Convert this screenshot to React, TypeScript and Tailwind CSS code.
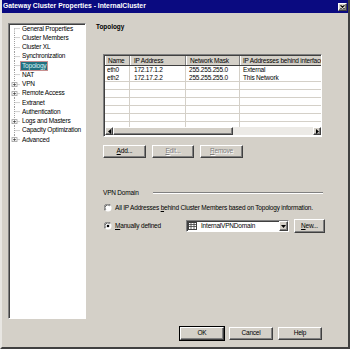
import React from "react";

const raised =
  "border border-t-white border-l-white border-b-[#404040] border-r-[#404040] shadow-[inset_-1px_-1px_#808080] bg-[#d4d0c8]";
const sunken =
  "border border-t-[#808080] border-l-[#808080] border-b-white border-r-white shadow-[inset_1px_1px_#404040]";

type BtnProps = { w: string; children: React.ReactNode; disabled?: boolean; def?: boolean };
const Btn = ({ w, children, disabled, def }: BtnProps) => (
  <div
    className={`h-[13px] ${w} ${raised} flex items-center justify-center leading-none ${
      disabled ? "text-[#808080] [text-shadow:1px_1px_#ffffff]" : "text-black"
    } ${def ? "outline outline-black" : ""}`}
  >
    {children}
  </div>
);

const items: { t: string; sel?: boolean; plus?: boolean }[] = [
  { t: "General Properties" },
  { t: "Cluster Members" },
  { t: "Cluster XL" },
  { t: "Synchronization" },
  { t: "Topology", sel: true },
  { t: "NAT" },
  { t: "VPN", plus: true },
  { t: "Remote Access", plus: true },
  { t: "Extranet" },
  { t: "Authentication" },
  { t: "Logs and Masters", plus: true },
  { t: "Capacity Optimization" },
  { t: "Advanced", plus: true },
];

const Radio = ({ checked }: { checked?: boolean }) => (
  <svg width="8" height="8" viewBox="0 0 8 8" className="shrink-0">
    <circle cx="4" cy="4" r="3.5" fill="#ffffff" />
    <path d="M1 6.5 A3.5 3.5 0 0 1 6.5 1" stroke="#808080" strokeWidth="1" fill="none" />
    <path d="M1.8 5.8 A2.6 2.6 0 0 1 5.8 1.8" stroke="#404040" strokeWidth="0.8" fill="none" />
    {checked && <circle cx="4" cy="4" r="1.3" fill="#000000" />}
  </svg>
);

export default function App() {
  const rows = Array.from({ length: 6 });
  return (
    <div className="w-[350px] h-[349px] bg-[#d4d0c8] flex flex-col border-l-2 border-l-[#e8e6e2] border-r-2 border-r-[#404040] border-b-2 border-b-[#404040] font-['Liberation_Sans',Arial,sans-serif] text-[6.5px] tracking-[-0.2px] text-black overflow-hidden">
      {/* Title bar */}
      <div className="h-[13px] shrink-0 bg-[#0a0a80] flex items-center justify-between pl-[1px] pr-[1px]">
        <span className="text-white font-bold text-[6.8px] tracking-normal leading-none">
          Gateway Cluster Properties - InternalCluster
        </span>
        <div className={`w-[9px] h-[8px] ${raised} flex items-center justify-center`}>
          <svg width="5" height="4" viewBox="0 0 5 4">
            <path d="M0.5 0.3 L4.5 3.7 M4.5 0.3 L0.5 3.7" stroke="#000" strokeWidth="1.1" />
          </svg>
        </div>
      </div>

      {/* Body */}
      <div className="flex h-[306px] shrink-0">
        {/* Tree */}
        <div className={`mt-[10px] ml-[6px] w-[78px] h-[296px] bg-white ${sunken} pl-[1px]`}>
          {items.map((it, i) => {
            const first = i === 0;
            const last = i === items.length - 1;
            return (
              <div key={it.t} className="flex h-[9.25px] items-center">
                <svg width="11" height="9.25" viewBox="0 0 11 9.25" className="shrink-0">
                  <line
                    x1="4.5"
                    y1={first ? 4.6 : 0}
                    x2="4.5"
                    y2={last ? 4.6 : 9.25}
                    stroke="#a0a0a0"
                    strokeWidth="1"
                    strokeDasharray="1 1"
                  />
                  <line x1="4.5" y1="4.6" x2="10.5" y2="4.6" stroke="#a0a0a0" strokeWidth="1" strokeDasharray="1 1" />
                  {it.plus && (
                    <g>
                      <rect x="2" y="2.6" width="5" height="4" fill="#ffffff" stroke="#a0a0a0" strokeWidth="0.8" />
                      <path d="M3 4.6 H6 M4.5 3.3 V5.9" stroke="#303030" strokeWidth="0.7" />
                    </g>
                  )}
                </svg>
                <span
                  className={`px-[1px] leading-[8px] h-[8px] whitespace-nowrap ${
                    it.sel ? "bg-[#21707f] text-[#d8f4f4] outline outline-[#c89090]" : ""
                  }`}
                >
                  {it.t}
                </span>
              </div>
            );
          })}
        </div>

        {/* Right panel */}
        <div className="flex flex-col w-[262px]">
          <div className="mt-[10px] ml-[10px] h-[8px] leading-[8px] font-bold text-[6.4px] tracking-normal">Topology</div>

          {/* Table */}
          <div className={`mt-[23px] ml-[17px] w-[219px] h-[83px] bg-white ${sunken} flex flex-col overflow-hidden`}>
            <div className="flex h-[10px] shrink-0 bg-[#d4d0c8] border-b border-b-[#404040] leading-[9px] whitespace-nowrap ml-[1px] mt-[1px]">
              <div className="w-[25px] shrink-0 pl-[2px] border-r border-r-[#808080] border-l border-l-white">Name</div>
              <div className="w-[56px] shrink-0 pl-[3px] border-r border-r-[#808080] border-l border-l-white">IP Address</div>
              <div className="w-[54px] shrink-0 pl-[3px] border-r border-r-[#808080] border-l border-l-white">Network Mask</div>
              <div className="w-[82px] shrink-0 pl-[2px] border-l border-l-white overflow-hidden">IP Addresses behind interface</div>
            </div>
            <div className="flex-1 ml-[1px] overflow-hidden">
              {[
                ["eth0", "172.17.1.2", "255.255.255.0", "External"],
                ["eth2", "172.17.2.2", "255.255.255.0", "This Network"],
              ].map((r, i) => (
                <div
                  key={r[0]}
                  className={`flex h-[8px] leading-[8px] whitespace-nowrap ${
                    i === 1 ? "border-b border-b-[#d4d0c8]" : ""
                  }`}
                >
                  <div className="w-[25px] shrink-0 pl-[2px] border-r border-r-[#d4d0c8]">{r[0]}</div>
                  <div className="w-[56px] shrink-0 pl-[4px] border-r border-r-[#d4d0c8]">{r[1]}</div>
                  <div className="w-[54px] shrink-0 pl-[3px] border-r border-r-[#d4d0c8]">{r[2]}</div>
                  <div className="flex-1 pl-[3px]">{r[3]}</div>
                </div>
              ))}
              {rows.map((_, i) => (
                <div key={i} className="flex h-[8px] border-b border-b-[#d4d0c8]">
                  <div className="w-[25px] shrink-0 border-r border-r-[#d4d0c8]" />
                  <div className="w-[56px] shrink-0 border-r border-r-[#d4d0c8]" />
                  <div className="w-[54px] shrink-0 border-r border-r-[#d4d0c8]" />
                  <div className="flex-1" />
                </div>
              ))}
            </div>
            {/* Horizontal scrollbar */}
            <div className="flex h-[8px] shrink-0 ml-[1px] mb-[1px] bg-[#eceae6]">
              <div className={`w-[8px] h-[8px] ${raised} flex items-center justify-center`}>
                <svg width="3" height="5" viewBox="0 0 3 5">
                  <path d="M3 0 L0 2.5 L3 5 Z" fill="#000" />
                </svg>
              </div>
              <div className={`w-[120px] h-[8px] ${raised}`} />
              <div className="flex-1" />
              <div className={`w-[8px] h-[8px] ${raised} flex items-center justify-center`}>
                <svg width="3" height="5" viewBox="0 0 3 5">
                  <path d="M0 0 L3 2.5 L0 5 Z" fill="#000" />
                </svg>
              </div>
            </div>
          </div>

          {/* Table buttons */}
          <div className="mt-[8px] ml-[17px] flex gap-[6px]">
            <Btn w="w-[43px]">
              <span>
                <u>A</u>dd...
              </span>
            </Btn>
            <Btn w="w-[42px]" disabled>
              <span>
                <u>E</u>dit...
              </span>
            </Btn>
            <Btn w="w-[43px]" disabled>
              <span>
                <u>R</u>emove
              </span>
            </Btn>
          </div>

          {/* VPN Domain */}
          <div className="mt-[31px] ml-[17px] h-[8px] flex items-center">
            <span className="leading-[8px] whitespace-nowrap">VPN Domain</span>
            <div className="ml-[14px] w-[170px] h-[2px] border-t border-t-[#808080] border-b border-b-white" />
          </div>

          <div className="mt-[7px] ml-[18px] h-[8px] flex items-center gap-[3px] whitespace-nowrap">
            <Radio />
            <span className="leading-[8px]">
              All IP Addresses <u>b</u>ehind Cluster Members based on Topology information.
            </span>
          </div>

          <div className="mt-[7px] ml-[18px] h-[14px] flex items-center whitespace-nowrap">
            <div className="w-[82px] flex items-center gap-[3px]">
              <Radio checked />
              <span className="leading-[8px]">
                <u>M</u>anually defined
              </span>
            </div>
            <div className={`w-[103px] h-[12px] bg-white ${sunken} flex items-center pl-[1px]`}>
              <svg width="9" height="8" viewBox="0 0 9 8" className="shrink-0">
                <rect x="0.5" y="0.5" width="8" height="7" fill="#ffffff" stroke="#404040" />
                <path d="M0.5 2.5 H8.5 M0.5 4.5 H8.5 M3 0.5 V7.5 M6 0.5 V7.5" stroke="#404040" strokeWidth="0.8" />
              </svg>
              <span className="ml-[4px] flex-1 leading-[8px]">InternalVPNDomain</span>
              <div className={`w-[9px] h-[10px] ${raised} flex items-center justify-center`}>
                <svg width="5" height="3" viewBox="0 0 5 3">
                  <path d="M0 0 H5 L2.5 3 Z" fill="#000" />
                </svg>
              </div>
            </div>
            <div className="ml-[5px]">
              <div className={`h-[14px] w-[31px] ${raised} flex items-center justify-center leading-none`}>
                <span>
                  <u>N</u>ew...
                </span>
              </div>
            </div>
          </div>
        </div>
      </div>

      {/* Bottom buttons */}
      <div className="mt-[8px] flex justify-end gap-[5px] pr-[26px]">
        <Btn w="w-[44px]" def>
          OK
        </Btn>
        <Btn w="w-[44px]">Cancel</Btn>
        <Btn w="w-[44px]">Help</Btn>
      </div>
    </div>
  );
}
